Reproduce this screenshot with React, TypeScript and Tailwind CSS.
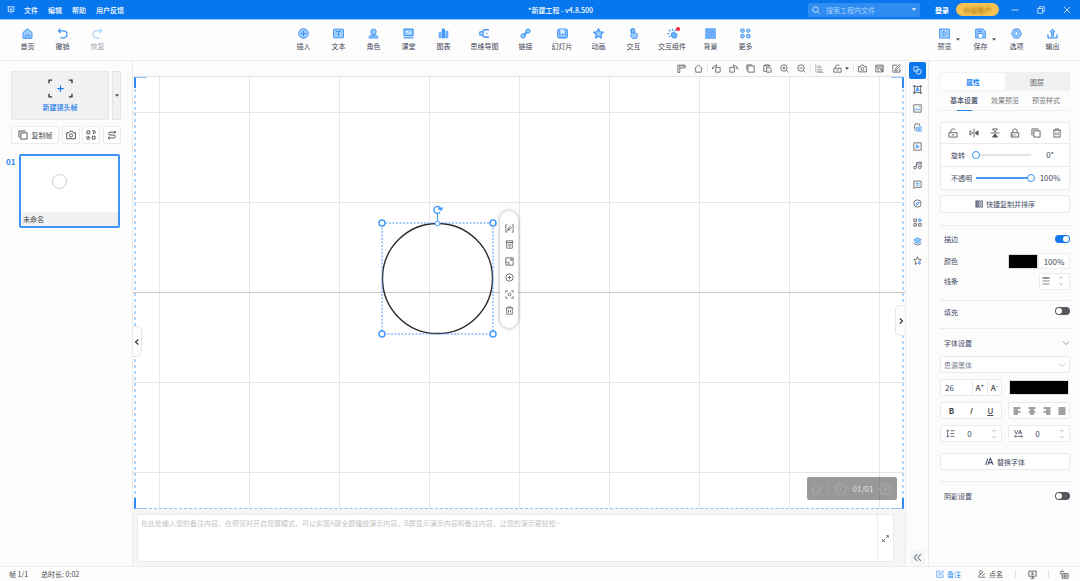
import clsx from 'clsx'
import type { ReactNode } from 'react'
import { useState } from 'react'

type IconProps = { children: ReactNode; className?: string }

/** 16-unit outline icon, coloured by the surrounding text colour. */
function Icon({ children, className = 'size-[10px]' }: IconProps) {
  return (
    <svg
      viewBox="0 0 16 16"
      className={clsx('shrink-0', className)}
      fill="none"
      stroke="currentColor"
      strokeWidth={1.4}
      strokeLinejoin="round"
      aria-hidden
    >
      {children}
    </svg>
  )
}

const LIGHT = '#9fcdfb'
const BLUE = '#3d94f6'

const art = {
  home: <path d="M1.500 6.500 8 1l6.500 5.500V15h-13zM5.500 14.500v-4h5v4" fill={LIGHT} stroke={BLUE} />,
  undo: <path d="M5 1 2 4.200l3 3M2 4.200h7.500a5 5 0 0 1 0 10H5" stroke={BLUE} strokeWidth={1.8} />,
  redo: <path d="m11 1 3 3.200-3 3M14 4.200H6.500a5 5 0 0 0 0 10H11" stroke="#a9d2fb" strokeWidth={1.8} />,
  insert: (
    <>
      <circle cx="8" cy="8" r="7" fill={LIGHT} stroke={BLUE} />
      <path d="M8 4v8M4 8h8" stroke={BLUE} strokeWidth={1.6} />
    </>
  ),
  text: (
    <>
      <rect x="0.700" y="1.700" width="14.600" height="12.600" rx="1" fill={LIGHT} stroke={BLUE} />
      <path d="M4.500 5h7M8 5v7" stroke={BLUE} strokeWidth={1.6} />
    </>
  ),
  role: (
    <>
      <path d="M1.500 14.500c0-3 2-4 4-4.500h5c2 .5 4 1.500 4 4.500z" fill={LIGHT} stroke={BLUE} />
      <circle cx="8" cy="5.500" r="4" fill={LIGHT} stroke={BLUE} />
      <path d="M6 12h4" stroke={BLUE} />
    </>
  ),
  lesson: (
    <>
      <rect x="1.500" y="1.500" width="13" height="9.500" fill={LIGHT} stroke={BLUE} strokeWidth={1.8} />
      <path d="M4.500 5.500h3M8.500 7.500h3" stroke="#fff" />
      <path d="M1 14.300h14" stroke={BLUE} strokeWidth={1.8} />
    </>
  ),
  chart: (
    <g stroke="none">
      <path d="M1 6h4v9H1z" fill="#6db0f8" />
      <path d="M5.500 1h4.500v14H5.500z" fill={BLUE} />
      <path d="M10.500 4H15v11h-4.500z" fill="#6db0f8" />
    </g>
  ),
  mindmap: (
    <>
      <path d="M14.500 2.500H9C5 2.500 5 8 2 8M14.500 13.500H9C5 13.500 5 8 2 8" stroke={BLUE} strokeWidth={2.200} />
      <path d="M1 5.500h5v5H1z" fill={LIGHT} stroke={BLUE} />
      <path d="M9 8h4" stroke={LIGHT} strokeWidth={2} />
    </>
  ),
  link: (
    <>
      <path d="m3.500 12.500 9-9" stroke={BLUE} strokeWidth={2.200} />
      <circle cx="11.500" cy="4.500" r="3.200" fill={LIGHT} stroke={BLUE} />
      <circle cx="4.500" cy="11.500" r="3.200" fill={LIGHT} stroke={BLUE} />
      <path d="m5.500 10.500 5-5" stroke={BLUE} strokeWidth={1.800} />
    </>
  ),
  slides: (
    <>
      <rect x="0.800" y="1.500" width="14.400" height="13" rx="2" fill={LIGHT} stroke={BLUE} />
      <path d="M4 2v9l2-2h4l2 2V2" fill="#dceefe" stroke={BLUE} />
      <path d="M3 14h10" stroke={BLUE} />
    </>
  ),
  star: <path d="m8 1 2.100 4.400 4.900.7-3.500 3.400.8 4.900L8 12.100l-4.300 2.300.8-4.900L1 6.100l4.900-.7z" fill={LIGHT} stroke={BLUE} strokeWidth={1.700} />,
  touch: (
    <>
      <path d="M5 9V3a1.700 1.700 0 0 1 3.500 0v4l4 1c2 .6 1.500 2.500 1 4.500L12.500 15h-6L3.500 11z" fill={LIGHT} stroke={BLUE} />
      <circle cx="7" cy="4" r="3.200" stroke={BLUE} />
    </>
  ),
  widget: (
    <>
      <path d="m6.500 7.500 3-1.500 5 3-.5 4.500-3 1.500-4-2z" fill="#6db0f8" stroke={BLUE} />
      <path d="M8 1v3M2.500 2.500 5 5M.5 8h3M3 13l2-2M13.500 2.500 11 5" stroke={BLUE} strokeWidth={1.600} />
    </>
  ),
  background: (
    <>
      <rect x="1" y="1" width="14" height="14" fill="#7db9f9" stroke="#6db0f8" />
      <path d="m1 6 5-5M1 11 11 1M1.500 15 15 1.500M6 15l9-9M11 15l4-4" stroke={BLUE} />
    </>
  ),
  more: (
    <g fill={LIGHT} stroke={BLUE}>
      <rect x="1" y="1.500" width="5.200" height="4.800" rx="1.500" />
      <rect x="9.500" y="1.500" width="5.200" height="4.800" rx="2.400" />
      <rect x="1" y="9.500" width="5.200" height="4.800" rx="1.500" />
      <rect x="9.500" y="9.500" width="5.200" height="4.800" rx="1.500" />
    </g>
  ),
  preview: (
    <>
      <rect x="0.800" y="1.500" width="14.400" height="13" fill={LIGHT} stroke={BLUE} />
      <path d="m6 5 5 3-5 3z" fill="#e4f2ff" stroke={BLUE} />
    </>
  ),
  save: (
    <>
      <path d="M1 1.500h10.500L15 5v9.500H1z" fill={LIGHT} stroke={BLUE} />
      <path d="M4.500 14V8h7v6" fill="#fff" stroke={BLUE} />
      <path d="M5 2v3h5" stroke={BLUE} />
    </>
  ),
  options: (
    <>
      <path d="M4.500 1.500h7L15.300 8l-3.800 6.500h-7L.7 8z" fill={LIGHT} stroke={BLUE} />
      <circle cx="8" cy="8" r="2.700" fill="#fff" stroke={BLUE} />
    </>
  ),
  output: (
    <>
      <path d="M1.500 9v5.500h13V9" stroke={BLUE} strokeWidth={1.800} />
      <path d="M6.500 12V5.500H4.500L8 1.500l3.500 4h-2V12z" fill={LIGHT} stroke={BLUE} />
    </>
  ),
}

const line = {
  copy: <path d="M4.500 4.500h10v10h-10zM12 2V1.500H1.500V12H2" />,
  camera: (
    <>
      <path d="M1 4.500h3.500L6 2h4l1.500 2.500H15v9.500H1z" />
      <circle cx="8" cy="8.800" r="2.600" />
    </>
  ),
  qr: <path d="M1.500 1.500h4.500v4.500H1.500zM10 10h4.500v4.500H10zM9.500 1.500h5V6M12 3.500v3M1.500 9.500v5h5M4 9.500v2.500h2.500" />,
  route: <path d="M14 3.500H5a2.300 2.300 0 0 0 0 4.600h6a2.300 2.300 0 0 1 0 4.700H2M11.500 1 14 3.500 11.500 6M4.500 10.500 2 12.800 4.500 15" />,
  flag: <path d="M1.500 2h13v5H5v8H1.500zM5 2v5M9 2v3M12 2v3" />,
  house: <path d="M8 1.500 1.500 8H3v6.500h10V8h1.500z" />,
  rotateLeft: <path d="M6.500 6h8v8.500h-8zM1 9c0-4 2-6 7-6M3 6.500 1 9 0 6.500M8 1v4" />,
  rotateRight: <path d="M1.500 6h8v8.500h-8zM15 9c0-4-2-6-7-6M13 6.500 15 9l1-2.500M8 1v4" />,
  square: <path d="M3.500 3.500h11v11h-11zM1.500 11V1.500H11" />,
  paste: <path d="M6 13H1.500V2.500H4M10 2.500h2.500V5M4 1.500h6v2H4zM6.500 6.500H12l2.500 2.500v5.500h-8z" />,
  zoomIn: <path d="M7 1.500a5.700 5.700 0 1 1 0 11.400 5.700 5.700 0 0 1 0-11.400zM11 11l4 4M7 4.500v5.400M4.300 7.200h5.400" />,
  zoomOut: <path d="M7 1.500a5.700 5.700 0 1 1 0 11.400 5.700 5.700 0 0 1 0-11.400zM11 11l4 4M4.300 7.200h5.400" />,
  align: <path d="M1.500 1v14M4 3.500h6v3H4M4 10h8v3H4M4 15h11" />,
  lock: <path d="M1.500 7.500h13v7h-13zM4.500 7V4.500C4.500 1 10.500.5 11.500 3.500M6 11h4" />,
  lockClosed: <path d="M2 7.500h12v7H2zM4.500 7V4.500c0-4 7-4 7 0V7M8 10v2M4.500 14v-4" />,
  book: <path d="M1.500 2h13v12h-13zM1.500 5h13M4 8h4M4 11h3M9 8.500h4v5M9 8.500l3.500 4.500" />,
  edit: <path d="M9 2H1.500v12.500H14V8M6 10l.5-2.500L13 1l2 2-6.500 6.500zM4 12h7" />,
  trash: <path d="M1.500 3.500h13M5.500 3V1.500h5V3M3 3.500v11h10v-11M6.300 7v4.500M9.700 7v4.500" />,
  flipH: (
    <>
      <path d="M8 1v14M6 8 1.500 4.500v7z" />
      <path d="m10 8 4.500-3.500v7z" fill="currentColor" />
    </>
  ),
  flipV: (
    <>
      <path d="M1 8h14M8 6.500 4 1.500h8z" />
      <path d="m8 9.500-4 5h8z" fill="currentColor" />
    </>
  ),
  columns: <path d="M1.500 1.500H5v13H1.500zM7 1.500h3v13H7zM12 1.500h3v13h-3zM3 2v12" />,
  penFrame: <path d="M4 1.500H1.500v13H4M12 1.500h2.500v13H12M5 11.500l1-4L9 4l2.500 2.500-2.500 3zM5 11.500l3-3.500" />,
  stamp: <path d="M2 1.500h12v3H2zM3 5v9.500h10V5M6 9l2 3 3-4M6 7.500h4" />,
  expand: <path d="M1.500 1.500h13v13h-13zM2 9.500h5V14M9 7l3.500-3.500M9.500 3.500h3v3" />,
  plusCircle: <path d="M8 1.500a6.500 6.500 0 1 1 0 13 6.500 6.500 0 0 1 0-13zM8 5v6M5 8h6" />,
  focus: <path d="M1.500 5V1.500H5M11 1.500h3.500V5M14.500 11v3.500H11M5 14.500H1.500V11M8 5.500a2.500 2.500 0 1 1 0 5 2.500 2.500 0 0 1 0-5z" />,
}

const fileItems = [
  { label: '首页', icon: art.home },
  { label: '撤销', icon: art.undo },
  { label: '恢复', icon: art.redo, muted: true },
]

const insertItems = [
  { label: '插入', icon: art.insert },
  { label: '文本', icon: art.text },
  { label: '角色', icon: art.role },
  { label: '课堂', icon: art.lesson },
  { label: '图表', icon: art.chart },
  { label: '思维导图', icon: art.mindmap, width: 'w-[47px]' },
  { label: '链接', icon: art.link },
  { label: '幻灯片', icon: art.slides, width: 'w-[38px]' },
  { label: '动画', icon: art.star },
  { label: '交互', icon: art.touch },
  { label: '交互组件', icon: art.widget, width: 'w-[42px]', dot: true },
  { label: '背景', icon: art.background },
  { label: '更多', icon: art.more },
]

const outputItems = [
  { label: '预览', icon: art.preview, caret: true },
  { label: '保存', icon: art.save, caret: true },
  { label: '选项', icon: art.options },
  { label: '输出', icon: art.output },
]

const canvasTools = [
  [
    { label: '标尺', icon: line.flag },
    { label: '主页', icon: line.house },
  ],
  [
    { label: '左旋', icon: line.rotateLeft },
    { label: '右旋', icon: line.rotateRight },
    { label: '复制', icon: line.square },
    { label: '粘贴', icon: line.paste },
    { label: '放大', icon: line.zoomIn },
    { label: '缩小', icon: line.zoomOut },
  ],
  [
    { label: '对齐', icon: line.align, muted: true },
    { label: '锁定', icon: line.lock, caret: true },
  ],
  [
    { label: '截图', icon: line.camera },
    { label: '笔记', icon: line.book },
    { label: '编辑', icon: line.edit },
  ],
]

const sideTools = [
  {
    label: '文本框',
    icon: (
      <>
        <path d="M2.500 2.500h11v11h-11zM1 1h2v2H1zM13 1h2v2h-2zM1 13h2v2H1zM13 13h2v2h-2z" />
        <path d="m5 12 3-8 3 8M6 9.500h4" stroke={BLUE} strokeWidth={1.800} />
      </>
    ),
  },
  {
    label: '图片',
    icon: (
      <>
        <path d="M1.500 1.500h13v13h-13z" />
        <path d="m3 12 3-4 2.500 3L11 9l2 2M10.500 5h1.500" stroke={BLUE} />
      </>
    ),
  },
  {
    label: '图形',
    icon: (
      <>
        <path d="M5 9H2L4 1.500h7L12.500 6M2 12.500h3" />
        <path d="M6.500 7.500h8v7h-8zM9 10h3v2.500H9z" stroke={BLUE} />
      </>
    ),
  },
  {
    label: '视频',
    icon: (
      <>
        <path d="M1.500 1.500h13v13h-13z" />
        <path d="m6 5 5 3-5 3z" stroke={BLUE} fill={LIGHT} />
      </>
    ),
  },
  {
    label: '音频',
    icon: (
      <>
        <path d="M6 11V3l8.500-1.500V11M6 6l8.500-1.500M3.500 9.500a2 2 0 1 1 0 4.500 2 2 0 0 1 0-4.500z" />
        <circle cx="12" cy="11.500" r="2.200" />
        <path d="M8.500 9h3" stroke={BLUE} />
      </>
    ),
  },
  {
    label: '批注',
    icon: (
      <>
        <path d="M1.500 2h13v11H5l-3.500 2z" />
        <path d="M4.500 6h7M4.500 9h7" stroke={BLUE} />
      </>
    ),
  },
  {
    label: '指引',
    icon: (
      <>
        <circle cx="8" cy="8" r="6.500" />
        <path d="m5 11 1.500-4L11 5 9.500 9z" stroke={BLUE} />
      </>
    ),
  },
  {
    label: '组件',
    icon: (
      <>
        <path d="M1.500 2h4.500v4.500H1.500zM1.500 10h4.500v4.500H1.500zM10 10h4.500v4.500H10z" />
        <circle cx="12.200" cy="4.200" r="2.500" stroke={BLUE} fill={LIGHT} />
      </>
    ),
  },
  {
    label: '图层',
    icon: (
      <>
        <path d="m1.500 11.500 6.500 3 6.500-3" />
        <path d="m8 1.500 6.500 3.200L8 8 1.500 4.700zM1.500 8 8 11.500 14.500 8" stroke={BLUE} fill={LIGHT} />
      </>
    ),
  },
  {
    label: '收藏',
    icon: (
      <>
        <path d="m8 1.500 2 4.500 4.500.5-3.300 3M8 1.500 6 6l-4.500.5L5 10l-1 5 4-2.500" />
        <path d="m11.500 9.500.5 2 2 .8-2 .7-.5 2-.6-2-2-.7 2-.8z" stroke={BLUE} />
      </>
    ),
  },
]

const objectTools = [
  { label: '编辑形状', icon: line.penFrame },
  { label: '替换', icon: line.stamp },
  { label: '缩放', icon: line.expand },
  { label: '添加', icon: line.plusCircle },
  { label: '聚焦', icon: line.focus },
  { label: '删除', icon: line.trash },
]

const arrangeTools = [
  { label: '解锁', icon: line.lock },
  { label: '水平翻转', icon: line.flipH },
  { label: '垂直翻转', icon: line.flipV },
  { label: '锁定', icon: line.lockClosed },
  { label: '复制', icon: line.copy },
  { label: '删除', icon: line.trash },
]

const alignments = [
  { label: '左对齐', path: 'M1 2h14M1 6h9M1 10h14M1 14h9' },
  { label: '居中', path: 'M1 2h14M4 6h8M1 10h14M4 14h8' },
  { label: '右对齐', path: 'M1 2h14M6 6h9M1 10h14M6 14h9' },
  { label: '两端对齐', path: 'M1 2h14M1 6h14M1 10h14M1 14h14' },
]

function Caret({ className }: { className?: string }) {
  return (
    <svg viewBox="0 0 6 4" className={clsx('h-[3px] w-[4px] shrink-0', className)} aria-hidden>
      <path d="M0 0h6L3 4z" fill="currentColor" />
    </svg>
  )
}

type RibbonItem = {
  label: string
  icon: ReactNode
  width?: string
  muted?: boolean
  dot?: boolean
  caret?: boolean
}

function RibbonButton({ label, icon, width = 'w-[35px]', muted, dot, caret }: RibbonItem) {
  return (
    <button
      type="button"
      className={clsx(
        'relative flex shrink-0 flex-col items-center gap-[2px] whitespace-nowrap',
        width,
        muted ? 'text-[#a0a4ab]' : 'text-[#3f4558]',
      )}
    >
      <Icon className="size-[11px]">{icon}</Icon>
      {label}
      {dot && <span className="absolute right-[13px] -top-px size-[4px] rounded-full bg-[#f5222d]" />}
      {caret && <Caret className="absolute right-[2px] top-[10px] text-[#555]" />}
    </button>
  )
}

function Switch({ label, defaultChecked }: { label: string; defaultChecked?: boolean }) {
  return (
    <input
      type="checkbox"
      role="switch"
      aria-label={label}
      defaultChecked={defaultChecked}
      className="relative h-[8px] w-[15px] appearance-none rounded-full bg-[#54585f] before:absolute before:left-px before:top-px before:size-[6px] before:rounded-full before:bg-white checked:bg-[#1677ea] checked:before:left-[8px]"
    />
  )
}

function Spinner({ label }: { label: string }) {
  return (
    <span className="flex flex-col text-[#999]">
      <button type="button" aria-label={`${label}增加`}>
        <svg viewBox="0 0 6 4" className="mb-[4px] h-[3px] w-[4px]" aria-hidden>
          <path d="m0 4 3-3 3 3" fill="none" stroke="currentColor" />
        </svg>
      </button>
      <button type="button" aria-label={`${label}减少`}>
        <svg viewBox="0 0 6 4" className="h-[3px] w-[4px]" aria-hidden>
          <path d="m0 0 3 3 3-3" fill="none" stroke="currentColor" />
        </svg>
      </button>
    </span>
  )
}

const slider =
  'h-[8px] w-[59px] appearance-none bg-transparent [&::-webkit-slider-runnable-track]:h-[2px] [&::-webkit-slider-thumb]:-mt-[3px] [&::-webkit-slider-thumb]:size-[8px] [&::-webkit-slider-thumb]:appearance-none [&::-webkit-slider-thumb]:rounded-full [&::-webkit-slider-thumb]:border [&::-webkit-slider-thumb]:border-[#3d94f6] [&::-webkit-slider-thumb]:bg-white'

const box = 'rounded-[2px] border border-[#e9eaec] bg-white'

function TitleBar() {
  return (
    <header className="flex h-[20px] shrink-0 items-center border-b border-[#9ccbf8] bg-[#0876ec] font-medium text-white">
      <svg viewBox="0 0 16 16" className="ml-[7px] size-[8px]" fill="none" stroke="currentColor" strokeWidth={1.600} aria-label="Logo">
        <path d="M1 1.500h14M2.500 2v9H6M13.500 2v9H10M8 15V6M5.500 8 8 5l2.500 3" />
      </svg>
      <nav className="ml-[9px] flex gap-[10px]">
        <button type="button">文件</button>
        <button type="button">编辑</button>
        <button type="button">帮助</button>
        <button type="button">用户反馈</button>
      </nav>
      <h1 className="ml-auto mr-[215px] font-medium whitespace-nowrap">*新建工程 - v4.8.500</h1>
      <label className="flex h-[14px] w-[112px] items-center rounded-[2px] bg-[#2f8df2] px-[4px]">
        <Icon className="size-[8px]">
          <circle cx="7" cy="7" r="5.500" />
          <path d="m11 11 4 4" />
        </Icon>
        <input
          type="text"
          aria-label="搜索"
          placeholder="搜索工程内文件"
          className="ml-[6px] w-0 flex-1 font-normal outline-none placeholder:text-[#a5d0fb]"
        />
        <Caret />
      </label>
      <button type="button" className="ml-[15px] font-bold">登录</button>
      <button type="button" className="ml-[7px] h-[13px] w-[43px] rounded-full bg-[#f8c350] text-[#a87816]">
        <span className="block blur-[1px]">升级账户</span>
      </button>
      <div className="ml-[12px] mr-[9px] flex gap-[18px]">
        <button type="button" aria-label="最小化">
          <Icon className="size-[8px]"><path d="M1 8h14" /></Icon>
        </button>
        <button type="button" aria-label="还原">
          <Icon className="size-[8px]"><path d="M1.500 5h9.500v9.500H1.500zM4.500 5V1.500h10V11H11" /></Icon>
        </button>
        <button type="button" aria-label="关闭">
          <Icon className="size-[8px]"><path d="m2 2 12 12M14 2 2 14" /></Icon>
        </button>
      </div>
    </header>
  )
}

function Ribbon() {
  return (
    <div className="flex h-[41px] shrink-0 items-start justify-between border-b border-[#efefef] bg-[#fdfdfd] pt-[8px]">
      <div className="ml-[10px] mr-[7px] flex">
        {fileItems.map((item) => <RibbonButton key={item.label} {...item} />)}
      </div>
      <div className="flex">
        {insertItems.map((item) => <RibbonButton key={item.label} {...item} />)}
      </div>
      <div className="mr-[10px] flex gap-px">
        {outputItems.map((item) => <RibbonButton key={item.label} {...item} />)}
      </div>
    </div>
  )
}

function FramePanel() {
  const small = 'flex h-[18px] w-[18px] items-center justify-center rounded-[2px] border border-[#ebebeb] bg-white'
  return (
    <aside className="w-[133px] shrink-0 border-r border-[#ececec] bg-[#fcfcfc] pl-[11px] pr-[11px] pt-[10px] text-[#444]">
      <div className="flex gap-[3px]">
        <button
          type="button"
          className="flex h-[49px] flex-1 flex-col items-center gap-[4px] border border-dotted border-[#e0e1e3] bg-[#f0f1f3] pt-[7px] font-medium text-[#1677ea]"
        >
          <svg viewBox="0 0 24 18" className="h-[19px] w-[25px]" fill="none" aria-hidden>
            <path d="M1 4V1h3M20 1h3v3M23 14v3h-3M4 17H1v-3" stroke="#333" strokeWidth={1.300} />
            <path d="M12 6v6M9 9h6" stroke="#1677ea" strokeWidth={1.200} />
          </svg>
          新建镜头帧
        </button>
        <button type="button" aria-label="更多镜头帧" className="flex w-[9px] items-center justify-center rounded-[1px] border border-[#e2e3e5] bg-[#f0f1f3]">
          <Caret />
        </button>
      </div>
      <div className="mt-[6px] flex justify-between">
        <button type="button" className="flex h-[18px] w-[48px] items-center justify-center gap-[4px] rounded-[2px] border border-[#ebebeb] bg-white">
          <Icon>{line.copy}</Icon>
          复制帧
        </button>
        <button type="button" aria-label="截图" className={small}><Icon>{line.camera}</Icon></button>
        <button type="button" aria-label="二维码" className={small}><Icon>{line.qr}</Icon></button>
        <button type="button" aria-label="路径" className={small}><Icon>{line.route}</Icon></button>
      </div>
      <div className="-ml-[5px] mt-[10px] flex items-start gap-[3px]">
        <span className="w-[10px] pt-[3px] text-[8px] font-bold text-[#2a88f0]">01</span>
        <button type="button" className="mr-px flex h-[74px] flex-1 flex-col rounded-[2px] border-2 border-[#3d94f6] bg-[#f0f1f3] text-left">
          <span className="relative block w-full flex-1 bg-white">
            <span className="absolute left-[31px] top-[18px] size-[15px] rounded-full border border-[#ccc]" />
          </span>
          <span className="px-[2px] py-[2px]">未命名</span>
        </button>
      </div>
    </aside>
  )
}

function CanvasToolbar() {
  return (
    <div className="flex h-[16px] shrink-0 items-center justify-end border-b border-[#e4e4e4] bg-[#fcfcfc] text-[#555]">
      {canvasTools.map((group, i) => (
        <div key={i} className={clsx('flex', i > 0 && 'border-l border-[#e6e6e6]')}>
          {group.map((tool) => (
            <button
              key={tool.label}
              type="button"
              aria-label={tool.label}
              className={clsx(
                'flex items-center justify-center',
                'caret' in tool ? 'w-[25px] gap-[3px]' : 'w-[17px]',
                'muted' in tool && 'text-[#999]',
              )}
            >
              <Icon className="size-[9px]">{tool.icon}</Icon>
              {'caret' in tool && <Caret />}
            </button>
          ))}
        </div>
      ))}
    </div>
  )
}

function SelectedCircle() {
  const corners = [[5, 19], [116, 19], [5, 130], [116, 130]]
  return (
    <svg
      viewBox="0 0 121 136"
      className="absolute left-[calc(50%-142px)] top-[calc(50%-89px)] h-[136px] w-[121px]"
      fill="none"
      aria-label="圆形"
    >
      <circle cx="60.500" cy="74.500" r="55" stroke="#2a2a2a" strokeWidth={1.400} />
      <rect x="5" y="19" width="111" height="111" stroke="#4a9bf8" strokeDasharray="2 1.500" />
      <path d="M60.500 10v7" stroke="#4a9bf8" />
      <circle cx="60.500" cy="19.500" r="2.300" fill="#fff" stroke="#4a9bf8" />
      <path d="M63 8.200a3.500 3.500 0 1 1 .7-3.200M61.200 4.600l3 1.400 1.500-2.600" stroke="#4a9bf8" strokeWidth={1.400} />
      {corners.map(([x, y]) => (
        <circle key={`${x}-${y}`} cx={x} cy={y} r="3" fill="#fff" stroke="#4a9bf8" strokeWidth={1.500} />
      ))}
    </svg>
  )
}

const dashY = 'absolute inset-y-0 w-[2px] bg-[repeating-linear-gradient(to_bottom,#b4d6fc_0px,#b4d6fc_3px,transparent_3px,transparent_6px)]'
const corner = 'absolute h-[11px] w-[13px] border-[#2f8bf5]'

function Canvas() {
  return (
    <section
      aria-label="画布"
      className="relative min-h-0 flex-1 overflow-hidden bg-white bg-[linear-gradient(to_right,transparent_45px,#e6e6e6_45px,#e6e6e6_46px,transparent_46px),linear-gradient(to_bottom,transparent_44px,#e6e6e6_44px,#e6e6e6_45px,transparent_45px)] bg-[length:90px_90px] bg-center"
    >
      <span className="absolute inset-x-0 top-[calc(50%-1px)] h-px bg-[#c8c8c8]" />
      <span className={clsx(dashY, 'left-px')} />
      <span className={clsx(dashY, 'right-px')} />
      <span className="absolute inset-x-px bottom-0 border-b border-dashed border-[#8fc0fa]" />
      <span className={clsx(corner, 'left-px top-0 border-l-2 border-t border-t-[#8fc0fa]')} />
      <span className={clsx(corner, 'right-px top-0 border-r-2 border-t border-t-[#8fc0fa]')} />
      <span className={clsx(corner, 'bottom-0 left-px border-b border-l-2 border-b-[#8fc0fa]')} />
      <span className={clsx(corner, 'bottom-0 right-px border-b border-r-2 border-b-[#8fc0fa]')} />

      <SelectedCircle />

      <div className="absolute left-[calc(50%-19px)] top-[calc(50%-82px)] flex h-[117px] w-[18px] flex-col items-center justify-between rounded-full bg-white py-[13px] text-[#555] shadow-[0_0_4px_rgba(0,0,0,0.35)]">
        {objectTools.map((tool) => (
          <button key={tool.label} type="button" aria-label={tool.label}>
            <Icon className="size-[9px]">{tool.icon}</Icon>
          </button>
        ))}
      </div>

      <button
        type="button"
        aria-label="收起左侧"
        className="absolute left-0 top-[249px] flex h-[31px] w-[9px] items-center justify-center rounded-r-[5px] border border-l-0 border-[#e6e6e6] bg-[#fdfdfd] text-[#333]"
      >
        <Icon className="size-[8px]"><path d="M10.500 3 5 8l5.500 5" strokeWidth={2.200} /></Icon>
      </button>
      <button
        type="button"
        aria-label="收起右侧"
        className="absolute right-0 top-[228px] flex h-[31px] w-[10px] items-center justify-center rounded-l-[5px] border border-r-0 border-[#e6e6e6] bg-[#fdfdfd] text-[#333]"
      >
        <Icon className="size-[8px]"><path d="M5.500 3 11 8l-5.500 5" strokeWidth={2.200} /></Icon>
      </button>

      <div className="absolute bottom-[9px] right-[8px] flex h-[23px] w-[90px] items-center rounded-[2px] bg-black/40 px-[4px] text-[8px] text-[#e0e0e0]">
        <button type="button" aria-label="首页" className="text-[#ababab]">
          <Icon className="size-[11px]">{line.house}</Icon>
        </button>
        <span className="mx-[6px] h-[11px] w-px bg-[#a3a3a3]" />
        <button type="button" aria-label="上一帧" className="text-[#ababab]">
          <Icon className="size-[12px]"><circle cx="8" cy="8" r="7" /><path d="M9.500 5 6.500 8l3 3" /></Icon>
        </button>
        <span className="flex-1 text-center">01/01</span>
        <button type="button" aria-label="下一帧" className="mr-[2px] text-[#ababab]">
          <Icon className="size-[12px]"><circle cx="8" cy="8" r="7" /><path d="m6.500 5 3 3-3 3" /></Icon>
        </button>
      </div>
    </section>
  )
}

function Notes() {
  return (
    <div className="h-[57px] shrink-0 bg-[#f5f5f6] pb-[4px] pl-[4px] pr-[11px] pt-[5px]">
      <div className="flex h-full rounded-[2px] border border-[#ebebeb] bg-white">
        <textarea
          aria-label="备注"
          className="flex-1 resize-none px-[3px] py-[3px] outline-none placeholder:text-[#c3c3c3]"
          placeholder="在此处输入您的备注内容，在预览时开启双屏模式，可以实现A屏全屏播放演示内容，B屏显示演示内容和备注内容，让您的演示更轻松~"
        />
        <button type="button" aria-label="展开备注" className="flex w-[16px] items-center justify-center border-l border-[#ebebeb] text-[#555]">
          <Icon className="size-[7px]"><path d="M9 7l5-5M9.500 1.500h5v5M7 9l-5 5M1.500 9.500v5h5" strokeWidth={1.800} /></Icon>
        </button>
      </div>
    </div>
  )
}

function SideStrip() {
  return (
    <aside className="flex w-[23px] shrink-0 flex-col items-center border-l border-[#ececec] bg-[#fcfcfc] pt-px text-[#555]">
      <button type="button" aria-label="形状" className="flex size-[17px] items-center justify-center rounded-[2px] bg-[#0876ec] text-white">
        <Icon className="size-[9px]">
          <path d="M5 9H1.500V1.500H9V4" />
          <circle cx="10" cy="10" r="4.500" />
          <path d="m6.500 11 5-5" />
        </Icon>
      </button>
      <div className="mt-px flex flex-col">
        {sideTools.map((tool) => (
          <button key={tool.label} type="button" aria-label={tool.label} className="flex h-[19px] items-center">
            <Icon className="size-[9px]">{tool.icon}</Icon>
          </button>
        ))}
      </div>
      <button type="button" aria-label="收起" className="mb-px mt-auto flex size-[15px] items-center justify-center bg-[#f6f6f7] text-[#6c7588]">
        <Icon className="size-[9px]"><path d="M7.500 2 2 8l5.500 6M14 2 8.500 8l5.500 6" strokeWidth={1.800} /></Icon>
      </button>
    </aside>
  )
}

function PropertyPanel() {
  const [tab, setTab] = useState('属性')
  return (
    <aside className="w-[152px] shrink-0 overflow-hidden border-l border-[#ececec] bg-[#fcfcfc] pl-[11px] pr-[10px] pt-[11px] text-[#424a63]">
      <div className="flex h-[19px] border border-[#f0f1f3]">
        {['属性', '图层'].map((name) => (
          <button
            key={name}
            type="button"
            onClick={() => setTab(name)}
            className={clsx('flex-1', name === tab ? 'bg-white font-bold text-[#1c86f5]' : 'bg-[#f0f1f3] text-[#666]')}
          >
            {name}
          </button>
        ))}
      </div>
      <div className="flex h-[20px] justify-between border-b border-[#efefef] px-[10px]">
        <button type="button" className="relative pb-[2px] font-medium">
          基本设置
          <span className="absolute -bottom-px left-[7px] h-px w-[15px] bg-[#1c86f5]" />
        </button>
        <button type="button" className="pb-[2px] text-[#777]">效果预览</button>
        <button type="button" className="pb-[2px] text-[#777]">预览样式</button>
      </div>

      <div className={clsx(box, 'mt-[11px] divide-y divide-[#e9eaec]')}>
        <div className="flex h-[21px] items-center justify-between px-[7px] text-[#555]">
          {arrangeTools.map((tool) => (
            <button key={tool.label} type="button" aria-label={tool.label}>
              <Icon>{tool.icon}</Icon>
            </button>
          ))}
        </div>
        <div className="flex h-[23px] items-center pl-[10px]">
          <label htmlFor="rotate" className="w-[21px]">旋转</label>
          <input
            id="rotate"
            type="range"
            max={360}
            defaultValue={0}
            className={clsx(slider, '[&::-webkit-slider-runnable-track]:bg-[#e3e4e6]')}
          />
          <output htmlFor="rotate" className="flex-1 text-center text-[8px]">0°</output>
        </div>
        <div className="flex h-[22px] items-center pl-[10px]">
          <label htmlFor="opacity" className="w-[25px]">不透明</label>
          <input
            id="opacity"
            type="range"
            defaultValue={100}
            className={clsx(slider, '[&::-webkit-slider-runnable-track]:bg-[#4a9bf8]')}
          />
          <output htmlFor="opacity" className="w-[30px] text-center text-[8px]">100%</output>
        </div>
      </div>

      <button type="button" className={clsx(box, 'mt-[5px] flex h-[18px] w-full items-center justify-center gap-[3px]')}>
        <Icon className="size-[8px]">{line.columns}</Icon>
        快捷复制并排序
      </button>

      <section className="mt-[12px] border-t border-[#ececec] pb-[9px] pl-[4px]">
        <div className="flex h-[25px] items-center justify-between">
          <h2>描边</h2>
          <Switch label="描边" defaultChecked />
        </div>
        <div className="flex h-[20px] items-center">
          <label htmlFor="stroke-opacity" className="flex-1">颜色</label>
          <button type="button" aria-label="描边颜色" className="h-[15px] w-[30px] border border-[#dcdcdc] bg-black" />
          <input
            id="stroke-opacity"
            type="text"
            defaultValue="100%"
            className="h-[16px] w-[32px] border border-[#eee] bg-white text-center text-[8px]"
          />
        </div>
        <div className="flex h-[20px] items-center justify-between">
          <span>线条</span>
          <div className={clsx(box, 'flex h-[17px] w-[31px] items-center justify-between pl-[2px] pr-[6px]')}>
            <button type="button" aria-label="线条样式" className="text-[#555]">
              <Icon className="size-[8px]"><path d="M1 2h14" strokeWidth={2.500} /><path d="M1 8h14M1 14h14" /></Icon>
            </button>
            <Spinner label="线条粗细" />
          </div>
        </div>
      </section>

      <section className="flex h-[28px] items-start justify-between border-t border-[#ececec] pl-[4px] pt-[6px]">
        <h2>填充</h2>
        <Switch label="填充" />
      </section>

      <section className="border-t border-[#ececec]">
        <div className="flex h-[27px] items-center justify-between pl-[4px]">
          <h2>字体设置</h2>
          <button type="button" aria-label="折叠字体设置" className="text-[#777]">
            <Icon className="size-[8px]"><path d="m1.500 5 6.500 6 6.500-6" /></Icon>
          </button>
        </div>
        <div className="flex flex-col gap-[6px]">
          <div className="relative h-[17px]">
            <select aria-label="字体" className={clsx(box, 'block h-[17px] w-full appearance-none px-[3px] text-[#7a8090]')}>
              <option>思源黑体</option>
            </select>
            <Icon className="pointer-events-none absolute right-[4px] top-[5px] size-[8px] text-[#aaa]">
              <path d="m2 5 6 6 6-6" />
            </Icon>
          </div>
          <div className="grid h-[17px] grid-cols-2 gap-[6px]">
            <div className={clsx(box, 'flex h-[17px] divide-x divide-[#e9eaec] text-[#444]')}>
              <input type="text" aria-label="字号" defaultValue="26" className="w-0 flex-[2] pl-[4px] text-[8px] text-[#424a63]" />
              <button type="button" aria-label="增大字号" className="flex flex-1 justify-center pt-[3px] text-[8px] font-medium">
                A<span className="text-[6px] leading-[6px]">+</span>
              </button>
              <button type="button" aria-label="减小字号" className="flex flex-1 justify-center pt-[3px] text-[8px] font-medium">
                A<span className="text-[6px] leading-[6px]">-</span>
              </button>
            </div>
            <button type="button" aria-label="文字颜色" className="m-px border border-[#dcdcdc] bg-black" />
          </div>
          <div className="grid h-[17px] grid-cols-2 gap-[6px]">
            <div className={clsx(box, 'flex items-center justify-around text-[8px] text-[#444]')}>
              <button type="button" className="font-bold">B</button>
              <button type="button" className="font-medium italic">I</button>
              <button type="button" className="font-medium underline">U</button>
            </div>
            <div className={clsx(box, 'flex items-center justify-around text-[#444]')}>
              {alignments.map((item) => (
                <button key={item.label} type="button" aria-label={item.label}>
                  <Icon className="size-[8px]"><path d={item.path} strokeWidth={2} /></Icon>
                </button>
              ))}
            </div>
          </div>
          <div className="grid h-[17px] grid-cols-2 gap-[6px]">
            <div className={clsx(box, 'flex items-center pl-[5px] pr-[5px]')}>
              <Icon className="size-[9px]"><path d="M3 2v12M1 4l2-2.500L5 4M1 12l2 2.500L5 12M8 3h7M8 8h7M8 13h7" /></Icon>
              <input type="text" aria-label="行距" defaultValue="0" className="mr-[8px] w-0 flex-1 text-center text-[8px]" />
              <Spinner label="行距" />
            </div>
            <div className={clsx(box, 'flex items-center pl-[5px] pr-[5px]')}>
              <Icon className="size-[9px]"><path d="m1 2 3 7 3-7M8 9l3-7 3 7M9 7h4M1 13h14M3 11l-2 2 2 2M13 11l2 2-2 2" /></Icon>
              <input type="text" aria-label="字距" defaultValue="0" className="mr-[8px] w-0 flex-1 text-center text-[8px]" />
              <Spinner label="字距" />
            </div>
          </div>
        </div>
        <button type="button" className={clsx(box, 'mt-[11px] flex h-[17px] w-full items-center justify-center gap-[3px]')}>
          <Icon className="size-[9px]"><path d="M1 14 5 3M5 14l4.500-12L14.500 14M7 10h6" strokeWidth={1.800} /></Icon>
          替换字体
        </button>
      </section>

      <section className="mt-[11px] flex h-[29px] items-center justify-between border-t border-[#ececec] pl-[4px]">
        <h2>阴影设置</h2>
        <Switch label="阴影设置" />
      </section>
    </aside>
  )
}

function StatusBar() {
  return (
    <footer className="flex h-[15px] shrink-0 items-center border-t border-[#ececec] bg-[#fdfdfd] pl-[9px] pr-[11px] text-[#444]">
      <span>帧 1/1</span>
      <span className="ml-[13px]">总时长: 0:02</span>
      <button type="button" className="ml-auto flex items-center gap-[3px] font-medium text-[#3d94f6]">
        <Icon className="size-[8px]"><path d="M9 2H1.500v12.500H14V8M5 6h3M4.500 10h6M8 7l5.500-5.500 1.500 2L10 8.500" /></Icon>
        备注
      </button>
      <button type="button" className="ml-[17px] flex items-center gap-[3px]">
        <Icon className="size-[8px]"><path d="M6 1.500a3 3 0 1 1 0 6 3 3 0 0 1 0-6zM1 14c0-4 2-5 5-5M2 14.500h12M8 12l6-5" /></Icon>
        点名
      </button>
      <span className="mx-[12px] h-[8px] w-px bg-[#e2e2e2]" />
      <button type="button" aria-label="演示">
        <Icon className="size-[9px]"><path d="M1.500 2h13v9h-13zM8 11v3M4.500 14.500h7M7 4.500 10 6.500l-3 2z" /></Icon>
      </button>
      <span className="mx-[11px] h-[8px] w-px bg-[#e2e2e2]" />
      <button type="button" aria-label="锁定窗口">
        <Icon className="size-[9px]"><path d="M4 6.500h10.500v8H4zM1.500 8V2H6l1 2M7 9h4v3H7z" /></Icon>
      </button>
    </footer>
  )
}

export default function App() {
  return (
    <div className="flex h-screen flex-col overflow-hidden bg-white font-['Noto_Sans_CJK_SC',sans-serif] text-[7px] leading-[10px]">
      <TitleBar />
      <Ribbon />
      <div className="flex min-h-0 flex-1">
        <FramePanel />
        <main className="flex min-w-0 flex-1 flex-col">
          <CanvasToolbar />
          <Canvas />
          <Notes />
        </main>
        <SideStrip />
        <PropertyPanel />
      </div>
      <StatusBar />
    </div>
  )
}
